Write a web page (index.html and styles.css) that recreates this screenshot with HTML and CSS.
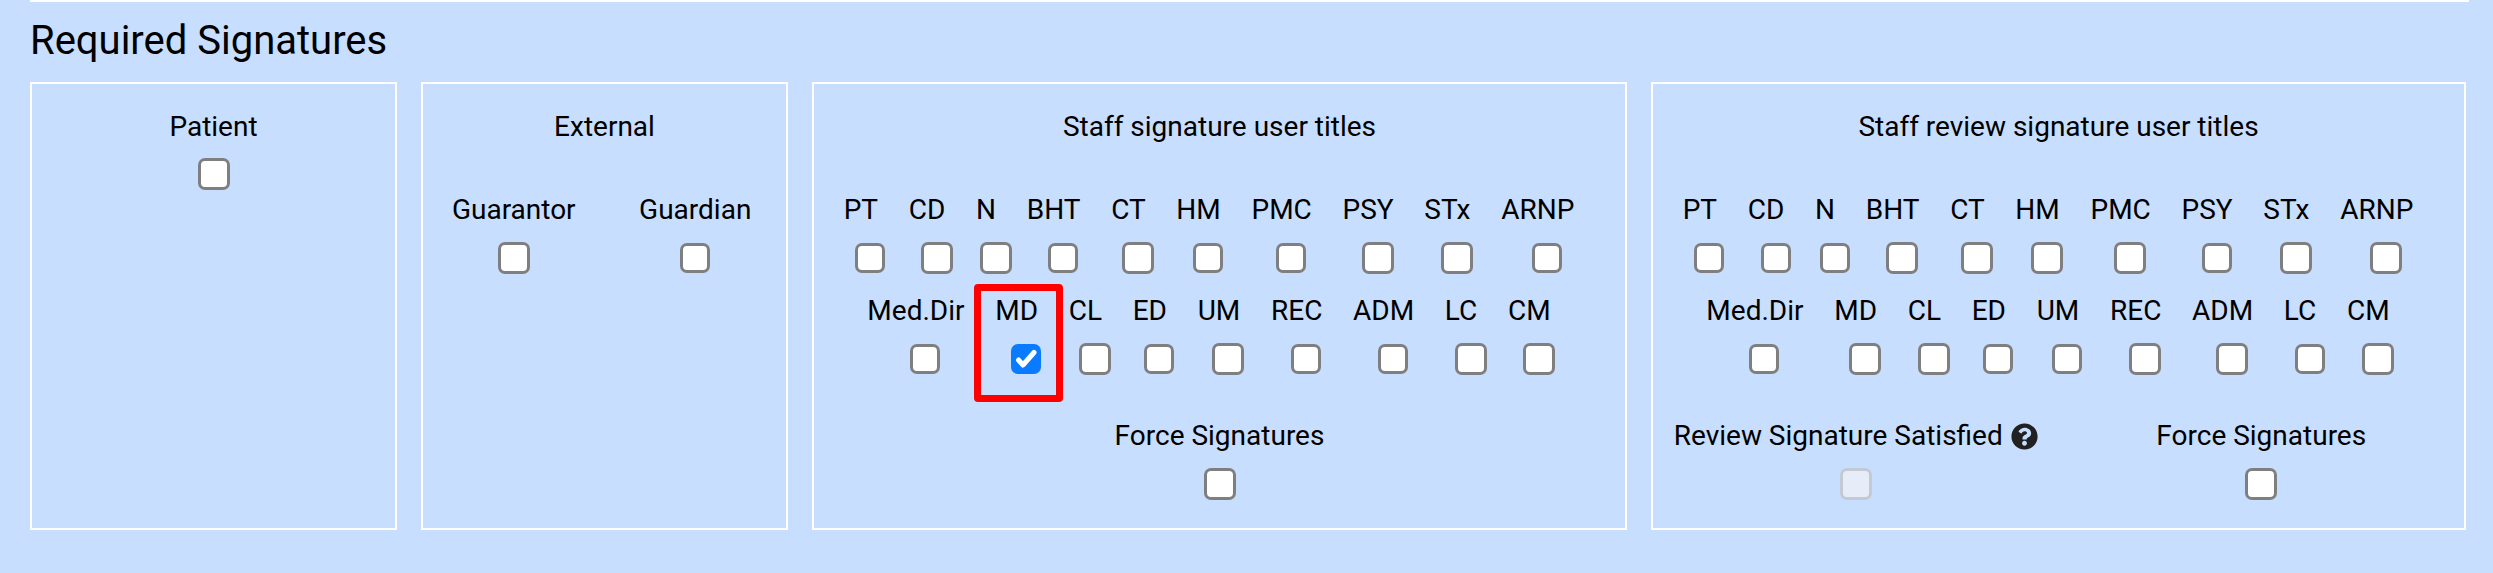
FILE: index.html
```html
<!DOCTYPE html>
<html lang="en">
  <head>
    <meta charset="UTF-8" />
    <title>Required Signatures</title>
    <link rel="stylesheet" href="styles.css">
  </head>
  <body>
    <div class="top-rule"></div>
    <h2 class="page-title">Required Signatures</h2>
    <div class="sig-grid">
      <section class="sig-box">
        <div class="sig-title">Patient</div>
        <div class="single"><input type="checkbox" class="check lg" /></div>
      </section>

      <section class="sig-box">
        <div class="sig-title">External</div>
        <div class="two-col first-row">
          <div class="col"><label>Guarantor</label><input type="checkbox" class="check lg" /></div>
          <div class="col"><label>Guardian</label><input type="checkbox" class="check" /></div>
        </div>
      </section>

      <section class="sig-box">
        <div class="sig-title">Staff signature user titles</div>
        <div class="title-row first-row">
          <div class="item"><label>PT</label><input type="checkbox" class="check" /></div>
          <div class="item"><label>CD</label><input type="checkbox" class="check lg" /></div>
          <div class="item"><label>N</label><input type="checkbox" class="check lg" /></div>
          <div class="item"><label>BHT</label><input type="checkbox" class="check" /></div>
          <div class="item"><label>CT</label><input type="checkbox" class="check lg" /></div>
          <div class="item"><label>HM</label><input type="checkbox" class="check" /></div>
          <div class="item"><label>PMC</label><input type="checkbox" class="check" /></div>
          <div class="item"><label>PSY</label><input type="checkbox" class="check lg" /></div>
          <div class="item"><label>STx</label><input type="checkbox" class="check lg" /></div>
          <div class="item"><label>ARNP</label><input type="checkbox" class="check" /></div>
        </div>
        <div class="title-row">
          <div class="item"><label>Med.Dir</label><input type="checkbox" class="check" /></div>
          <div class="item">
            <label>MD</label><input type="checkbox" class="check" checked />
            <div class="highlight"></div>
          </div>
          <div class="item"><label>CL</label><input type="checkbox" class="check lg" /></div>
          <div class="item"><label>ED</label><input type="checkbox" class="check" /></div>
          <div class="item"><label>UM</label><input type="checkbox" class="check lg" /></div>
          <div class="item"><label>REC</label><input type="checkbox" class="check" /></div>
          <div class="item"><label>ADM</label><input type="checkbox" class="check" /></div>
          <div class="item"><label>LC</label><input type="checkbox" class="check lg" /></div>
          <div class="item"><label>CM</label><input type="checkbox" class="check lg" /></div>
        </div>
        <div class="force-row">
          <div class="col"><label>Force Signatures</label><input type="checkbox" class="check lg" /></div>
        </div>
      </section>

      <section class="sig-box">
        <div class="sig-title">Staff review signature user titles</div>
        <div class="title-row first-row">
          <div class="item"><label>PT</label><input type="checkbox" class="check" /></div>
          <div class="item"><label>CD</label><input type="checkbox" class="check" /></div>
          <div class="item"><label>N</label><input type="checkbox" class="check" /></div>
          <div class="item"><label>BHT</label><input type="checkbox" class="check lg" /></div>
          <div class="item"><label>CT</label><input type="checkbox" class="check lg" /></div>
          <div class="item"><label>HM</label><input type="checkbox" class="check lg" /></div>
          <div class="item"><label>PMC</label><input type="checkbox" class="check lg" /></div>
          <div class="item"><label>PSY</label><input type="checkbox" class="check" /></div>
          <div class="item"><label>STx</label><input type="checkbox" class="check lg" /></div>
          <div class="item"><label>ARNP</label><input type="checkbox" class="check lg" /></div>
        </div>
        <div class="title-row">
          <div class="item"><label>Med.Dir</label><input type="checkbox" class="check" /></div>
          <div class="item"><label>MD</label><input type="checkbox" class="check lg" /></div>
          <div class="item"><label>CL</label><input type="checkbox" class="check lg" /></div>
          <div class="item"><label>ED</label><input type="checkbox" class="check" /></div>
          <div class="item"><label>UM</label><input type="checkbox" class="check" /></div>
          <div class="item"><label>REC</label><input type="checkbox" class="check lg" /></div>
          <div class="item"><label>ADM</label><input type="checkbox" class="check lg" /></div>
          <div class="item"><label>LC</label><input type="checkbox" class="check" /></div>
          <div class="item"><label>CM</label><input type="checkbox" class="check lg" /></div>
        </div>
        <div class="two-col force-row">
          <div class="col">
            <label class="with-icon">Review Signature Satisfied
              <svg class="help-icon" viewBox="0 0 512 512"><path d="M504 256c0 137-111 248-248 248S8 393 8 256 119 8 256 8s248 111 248 248zM263 90c-54 0-89 23-116 64-4 5-3 12 3 16l35 26c5 4 13 3 17-2 18-23 30-36 57-36 20 0 45 13 45 32 0 15-12 22-32 33-23 13-54 30-54 71v8c0 7 5 12 12 12h56c7 0 12-5 12-12v-3c0-29 84-30 84-107 0-58-60-102-119-102zM256 338c-26 0-46 21-46 46s20 46 46 46 46-21 46-46-20-46-46-46z"/></svg>
            </label>
            <input type="checkbox" class="check lg" disabled />
          </div>
          <div class="col"><label>Force Signatures</label><input type="checkbox" class="check lg" /></div>
        </div>
      </section>
    </div>
  </body>
</html>
```

FILE: styles.css
```css
* {
  box-sizing: border-box;
}
html,
body {
  height: 100%;
}
body {
  margin: 0;
  padding: 0 24px 0 30px;
  overflow: hidden;
  background: #c8deff;
  color: #000;
  font-family: Roboto, sans-serif;
  font-size: 28px;
  line-height: 42px;
}
label {
  display: block;
  white-space: nowrap;
}
.top-rule {
  height: 2px;
  background: #fff;
}
.page-title {
  margin: 14px 0 0;
  height: 66px;
  font-size: 40px;
  line-height: 50px;
  font-weight: 400;
}
.sig-grid {
  display: grid;
  grid-template-columns: 367px 367px 815px 815px;
  gap: 24px;
  height: 448px;
}
.sig-box {
  border: 2px solid #fff;
  padding-top: 22px;
  text-align: center;
}
.sig-title {
  height: 42px;
}
.single {
  display: flex;
  justify-content: center;
  margin-top: 10px;
}
.first-row {
  margin-top: 41px;
}
.two-col {
  display: grid;
  grid-template-columns: 1fr 1fr;
}
.col {
  display: flex;
  flex-direction: column;
  align-items: center;
  row-gap: 11px;
}
.title-row {
  display: flex;
  justify-content: center;
  gap: 30.7px;
  padding-right: 21px;
  margin-bottom: 16px;
}
.item {
  position: relative;
  display: flex;
  flex-direction: column;
  align-items: center;
  row-gap: 11px;
}
.force-row {
  margin-top: 40px;
}
.with-icon {
  display: flex;
  align-items: center;
  gap: 8px;
}
.help-icon {
  width: 27px;
  height: 27px;
  fill: #212121;
}
.check {
  appearance: none;
  display: block;
  flex: none;
  width: 30px;
  height: 30px;
  margin: 1px 0;
  border: 3px solid #7f7f7f;
  border-radius: 7px;
  background: #fff;
}
.check.lg {
  width: 32px;
  height: 32px;
  margin: 0;
}
/* title checkboxes sit right of the label centre and don't add to the item width */
.item .check {
  margin: 1px -24.5px 1px -5.5px;
}
.item .check.lg {
  margin: 0 -25.5px 0 -6.5px;
}
.check:checked {
  border: 0;
  background: #0a7bff url("data:image/svg+xml,%3Csvg xmlns='http://www.w3.org/2000/svg' viewBox='0 0 30 30'%3E%3Cpath fill='none' stroke='%23fff' stroke-linecap='round' stroke-linejoin='round' stroke-width='5' d='m7.5 16 4.5 5 11-12.5'/%3E%3C/svg%3E") center / 100% no-repeat;
}
.check:disabled {
  border-color: #c4cad4;
  background: #e6edf8;
}
.highlight {
  position: absolute;
  top: -6px;
  left: -21px;
  width: 89px;
  height: 118px;
  border: 7px solid #f00;
  border-radius: 4px;
}
```
